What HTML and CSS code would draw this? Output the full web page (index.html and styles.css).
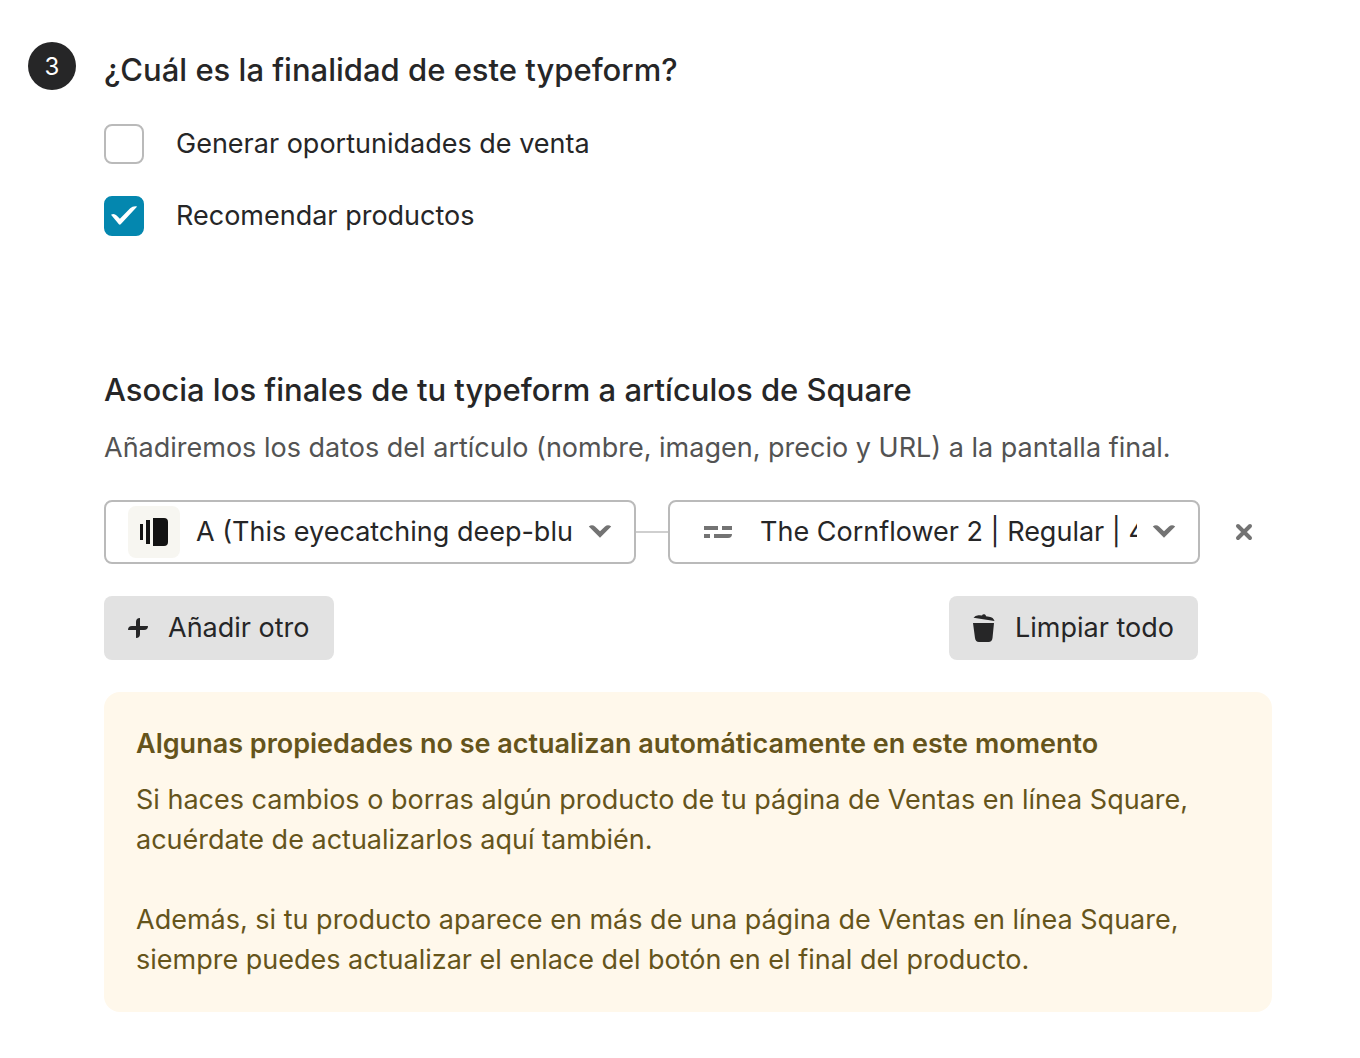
FILE: index.html
```html
<!DOCTYPE html>
<html lang="es">
<head>
	<meta charset="UTF-8">
	<meta name="viewport" content="width=device-width, initial-scale=1">
	<title>Typeform y Square</title>
	<link rel="stylesheet" href="styles.css">
</head>
<body>
<main class="step">
	<span class="step_num">3</span>
	<div class="step_body">
		<fieldset class="purpose">
			<legend class="title">¿Cuál es la finalidad de este typeform?</legend>
			<label class="option">
				<input type="checkbox" class="check" name="leads">
				<span>Generar oportunidades de venta</span>
			</label>
			<label class="option">
				<span class="check_wrap">
					<input type="checkbox" class="check" name="products" checked>
					<svg class="check_icon" width="40" height="40" viewBox="0 0 40 40" aria-hidden="true"><path d="M7 18.800Q10 16.800 12.600 19.500L15.900 22.800L26.200 12.300Q28.800 9.700 33.200 10.400L16.700 28.300Q15.800 29.200 14.900 28.300Z" fill="#fff"/></svg>
				</span>
				<span>Recomendar productos</span>
			</label>
		</fieldset>

		<section class="mapping">
			<h2 class="title">Asocia los finales de tu typeform a artículos de Square</h2>
			<p class="desc">Añadiremos los datos del artículo (nombre, imagen, precio y URL) a la pantalla final.</p>
			<div class="pair">
				<div class="picker">
					<select class="select" aria-label="Final del typeform">
						<option>A (This eyecatching deep-blue flower)</option>
					</select>
					<svg class="picker_icon" width="52" height="52" viewBox="0 0 52 52" aria-hidden="true"><rect width="52" height="52" rx="8" fill="#f7f6f1"/><path d="M12 18h3v16h-3zM18 14h4v24h-4zM25 12h11q4 0 4 4v20q0 4-4 4H25z" fill="#131313"/></svg>
					<svg class="arrow" width="24" height="24" viewBox="0 0 24 24" aria-hidden="true"><path d="M.8 6.500Q4 4 7 6.500L12 11.300L17 6.500Q20 4 23.200 6.500L12 17.800Z" fill="#737373"/></svg>
				</div>
				<span class="link"></span>
				<div class="picker">
					<select class="select" aria-label="Artículo de Square">
						<option>The Cornflower 2 | Regular | 40 EUR</option>
					</select>
					<svg class="picker_icon" width="52" height="52" viewBox="0 0 52 52" aria-hidden="true"><path d="M12 20h14v4H12zM30 20h10v4H30zM12 28h6v4h-6zM22 28h18q0 4-4 4H22z" fill="#737373"/></svg>
					<svg class="arrow" width="24" height="24" viewBox="0 0 24 24" aria-hidden="true"><path d="M.8 6.500Q4 4 7 6.500L12 11.300L17 6.500Q20 4 23.200 6.500L12 17.800Z" fill="#737373"/></svg>
				</div>
				<button type="button" class="remove" aria-label="Eliminar">
					<svg width="18" height="18" viewBox="0 0 18 18" aria-hidden="true"><path d="M3 3L15 15M15 3L3 15" stroke="#737373" stroke-width="4" stroke-linecap="round"/></svg>
				</button>
			</div>
			<div class="actions">
				<button type="button" class="btn">
					<svg width="20" height="24" viewBox="0 0 20 24" aria-hidden="true"><path d="M8 6Q8 2 12 2V10H20Q20 14 16 14H12V18Q12 22 8 22V14H0Q0 10 4 10H8Z" fill="#262627"/></svg>
					Añadir otro
				</button>
				<button type="button" class="btn">
					<svg width="22" height="28" viewBox="0 0 22 28" aria-hidden="true"><path d="M0 9H21L19.500 24Q19 28 15.500 28H6Q2.500 28 2 24ZM.5 3.800Q2.500 .8 6.500 1.300L9 1.600Q9.500 0 11.500 .3Q13 .6 13 2.200L16 2.700Q20.500 3.300 21.500 7Z" fill="#262627"/></svg>
					Limpiar todo
				</button>
			</div>
			<div class="notice">
				<h3 class="notice_title">Algunas propiedades no se actualizan automáticamente en este momento</h3>
				<p>Si haces cambios o borras algún producto de tu página de Ventas en línea Square, acuérdate de actualizarlos aquí también.</p>
				<p>Además, si tu producto aparece en más de una página de Ventas en línea Square, siempre puedes actualizar el enlace del botón en el final del producto.</p>
			</div>
		</section>
	</div>
</main>
</body>
</html>
```

FILE: styles.css
```css
*{box-sizing:border-box;margin:0;padding:0;}
body{font:27px/40px Inter,"Liberation Sans",sans-serif;color:#262627;background:#fff;}
button,select,input{font:inherit;color:inherit;}
svg{display:block;flex:none;}
.step{display:flex;gap:28px;padding:42px 88px 46px 28px;}
.step_num{flex:none;width:48px;height:48px;border-radius:50%;background:#262627;color:#fff;font-size:24px;line-height:50px;text-align:center;}
.step_body{flex:1;min-width:0;padding-top:8px;}
.title{font-size:31px;line-height:40px;font-weight:500;}
.purpose{border:0;}
.purpose .title{margin-bottom:34px;}
.option{display:flex;align-items:center;gap:32px;margin-bottom:32px;cursor:pointer;}
.check{display:block;appearance:none;width:40px;height:40px;border:2px solid #bababa;border-radius:8px;background:#fff;}
.check:checked{border-color:#0487af;background:#0487af;}
.check_wrap{display:grid;}
.check_wrap > *{grid-area:1 / 1;}
.check_icon{pointer-events:none;}
.mapping{padding-top:102px;}
.desc{margin:18px 0 32px;color:#535353;}
.pair{display:grid;grid-template-columns:1fr 32px 1fr 56px;align-items:center;padding-right:16px;}
.picker{display:grid;align-items:center;min-width:0;}
.picker > *{grid-area:1 / 1;}
.select{appearance:none;width:100%;height:64px;padding:0 61px 0 90px;border:2px solid #bababa;border-radius:8px;background:#fff;cursor:pointer;}
.picker_icon{margin-left:24px;pointer-events:none;}
.arrow{justify-self:end;margin-right:24px;pointer-events:none;}
.link{height:2px;background:#cfcfcf;}
.remove{display:flex;justify-content:center;width:56px;margin-left:16px;padding:16px 0;border:0;background:none;cursor:pointer;}
.actions{display:flex;justify-content:space-between;margin:32px 74px 32px 0;}
.btn{display:flex;align-items:center;gap:20px;height:64px;padding:0 24px;border:0;border-radius:8px;background:#e2e2e2;cursor:pointer;}
.notice{padding:32px;border-radius:16px;background:#fff8eb;color:#65541b;}
.notice_title{margin-bottom:16px;font-size:27px;line-height:40px;font-weight:600;}
.notice p + p{margin-top:40px;}
```
